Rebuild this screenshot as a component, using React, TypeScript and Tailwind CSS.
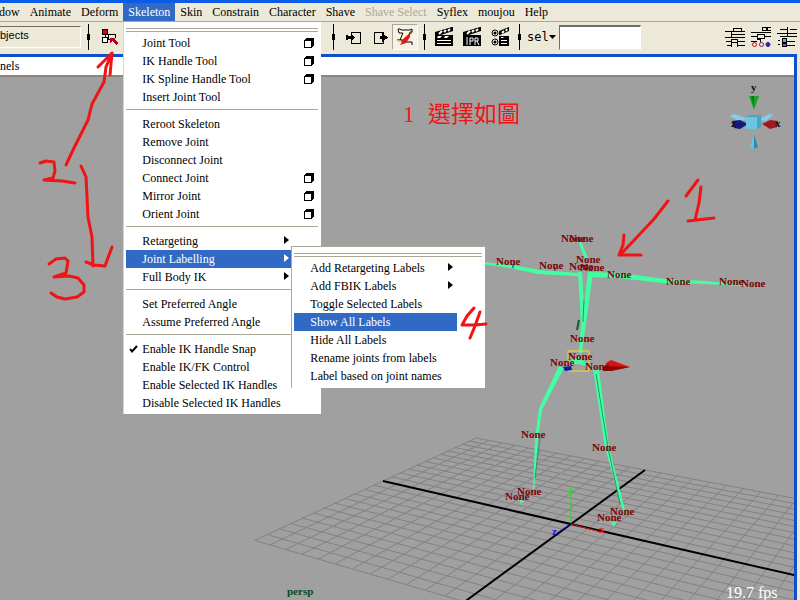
import React from 'react'

type MenuEntry = {
  name: string
  option?: boolean
  submenu?: boolean
  checked?: boolean
  active?: boolean
}

const menus = ["dow", "Animate", "Deform", "Skeleton", "Skin", "Constrain", "Character", "Shave", "Shave Select", "Syflex", "moujou", "Help"]

const skeletonGroups: MenuEntry[][] = [
  [
    { name: "Joint Tool", option: true },
    { name: "IK Handle Tool", option: true },
    { name: "IK Spline Handle Tool", option: true },
    { name: "Insert Joint Tool" },
  ],
  [
    { name: "Reroot Skeleton" },
    { name: "Remove Joint" },
    { name: "Disconnect Joint" },
    { name: "Connect Joint", option: true },
    { name: "Mirror Joint", option: true },
    { name: "Orient Joint", option: true },
  ],
  [
    { name: "Retargeting", submenu: true },
    { name: "Joint Labelling", submenu: true, active: true },
    { name: "Full Body IK", submenu: true },
  ],
  [
    { name: "Set Preferred Angle" },
    { name: "Assume Preferred Angle" },
  ],
  [
    { name: "Enable IK Handle Snap", checked: true },
    { name: "Enable IK/FK Control" },
    { name: "Enable Selected IK Handles" },
    { name: "Disable Selected IK Handles" },
  ],
]

const labelEntries: MenuEntry[] = [
  { name: "Add Retargeting Labels", submenu: true },
  { name: "Add FBIK Labels", submenu: true },
  { name: "Toggle Selected Labels" },
  { name: "Show All Labels", active: true },
  { name: "Hide All Labels" },
  { name: "Rename joints from labels" },
  { name: "Label based on joint names" },
]

// baseline positions of the joint labels in the scene
const jointLabels = [
  [561, 242], [569, 242], [496, 265], [539, 269], [576, 263], [569, 270], [580, 271], [607, 278], [666, 285],
  [719, 285], [741, 287], [570, 342], [568, 360], [550, 366], [585, 370], [521, 438], [592, 451],
  [517, 495], [505, 500], [610, 515], [597, 521],
]

function joinClassNames(...classes: string[]): string {
  return classes.join(" ")
}

function TearOff() {
  return (
    <div className="h-3 pt-[6px]">
      <div className="h-1 border-y border-[#aca899]" />
    </div>
  )
}

function OptionBox({ name }: { name: string }) {
  return (
    <button aria-label={name + " options"} className="flex w-[25px] items-center justify-end pr-1">
      <svg width="10" height="10" viewBox="0 0 10 10" shapeRendering="crispEdges">
        <path d="M2 0h8v8h-1v1h-1v1H0V2h1V1h1z" fill="#000" />
        <path d="M1 3h6v6H1z" fill="#fff" />
      </svg>
    </button>
  )
}

function MenuRow({ entry, children }: { entry: MenuEntry, children?: React.ReactNode }) {
  return (
    <li className="relative flex h-[18px]">
      <button
        className={joinClassNames(
          entry.active ? "bg-[#316ac5] text-white" : "text-black",
          "flex flex-1 items-center pr-1 text-left whitespace-nowrap"
        )}
      >
        <span className="flex w-4 shrink-0 justify-center pr-0.5">
          {entry.checked && (
            <svg width="9" height="8" viewBox="0 0 9 8">
              <path d="M1 4l2 2.500L8 1" fill="none" stroke="#000" strokeWidth="2" />
            </svg>
          )}
        </span>
        <span className="flex-1">{entry.name}</span>
        {entry.submenu && (
          <svg width="5" height="8" viewBox="0 0 5 8" className="mb-0.5">
            <path d="M0 0l5 4l-5 4z" fill="currentColor" />
          </svg>
        )}
      </button>
      {entry.option ? <OptionBox name={entry.name} /> : <span className="w-[25px]" />}
      {children}
    </li>
  )
}

function LabelMenu() {
  return (
    <ul className="absolute -top-1 left-[165px] z-20 w-[194px] border-t border-l border-[#aca899] bg-white pr-[3px] pb-[3px] pl-0.5">
      <li><TearOff /></li>
      {labelEntries.map((entry) => <MenuRow key={entry.name} entry={entry} />)}
    </ul>
  )
}

function SkeletonMenu() {
  return (
    <div className="absolute top-[19px] left-0 z-10 w-[198px] border-l border-[#d8d4c8] bg-white pr-[3px] pb-0.5 pl-0.5">
      <TearOff />
      {skeletonGroups.map((group, i) => (
        <React.Fragment key={i}>
          {i > 0 && <div className="h-[9px] pt-[3px]"><div className="h-px bg-[#aca899]" /></div>}
          <ul>
            {group.map((entry) => (
              <MenuRow key={entry.name} entry={entry}>
                {entry.name === "Joint Labelling" && <LabelMenu />}
              </MenuRow>
            ))}
          </ul>
        </React.Fragment>
      ))}
    </div>
  )
}

function MenuBar() {
  return (
    <nav className="-ml-[6px] flex h-[19px] shrink-0 border-b border-[#aca899] text-xs">
      {menus.map((name) => (
        <div key={name} className="relative flex">
          <button
            disabled={name === "Shave Select"}
            className={joinClassNames(
              name === "Skeleton" ? "bg-[#316ac5] text-white" : name === "Shave Select" ? "text-[#aca899]" : "text-black",
              "px-[5px] whitespace-nowrap"
            )}
          >
            {name}
          </button>
          {name === "Skeleton" && <SkeletonMenu />}
        </div>
      ))}
    </nav>
  )
}

function Divider() {
  return (
    <svg width="3" height="26" viewBox="0 0 3 26" shapeRendering="crispEdges" className="shrink-0">
      <path d="M1 0h1v26H1zM0 10h3v6H0z" />
    </svg>
  )
}

function Clapper({ children }: { children?: React.ReactNode }) {
  return (
    <svg width="19" height="20" viewBox="0 0 19 20">
      <path d="M0 5L17 0h1v4L3 9H0z" />
      <path d="M4 7l3-3M9 5l2-2M13 4l2-2" stroke="#fff" strokeWidth="2" />
      <path d="M0 8h18v11H0z" />
      {children}
    </svg>
  )
}

function Toolbar() {
  return (
    <div className="flex h-8 shrink-0 items-center pb-0.5">
      <input
        aria-label="Selection mask"
        defaultValue="bjects"
        className="h-[22px] w-[81px] border-t border-r border-b border-t-[#716f64] border-r-white border-b-white bg-[#ece9d8] pb-1 font-['Liberation_Sans',sans-serif] text-[11px]"
      />
      <div className="flex w-[251px] shrink-0 items-center gap-3 pl-[6px]">
        <Divider />
        <button aria-label="Select by hierarchy">
          <svg width="16" height="16" viewBox="0 0 16 16" shapeRendering="crispEdges">
            <path d="M0 0h6v6H0z" fill="#000" />
            <path d="M1 1h4v4H1z" fill="#e00000" />
            <path d="M3 6v2M6 5h7v4M6 5v5h2" stroke="#000" fill="none" />
            <path d="M0 8h6v6H0z" fill="#000" />
            <path d="M1 9h4v4H1z" fill="#fff" />
            <path d="M8 9h5l-1 1l4 4l-2 2l-4-4l-2 2z" fill="#b00018" />
          </svg>
        </button>
      </div>
      <div className="flex shrink-0 items-center">
        <Divider />
        <button aria-label="Input connections" className="ml-[11px]">
          <svg width="15" height="13" viewBox="0 0 15 13" shapeRendering="crispEdges">
            <path d="M5 3V1h9v11H5v-3" fill="none" stroke="#000" />
            <path d="M0 4h2v1h6v3H2v1H0z" />
            <path d="M5 3l4 3.500L5 10z" />
          </svg>
        </button>
        <button aria-label="Output connections" className="ml-3">
          <svg width="15" height="13" viewBox="0 0 15 13" shapeRendering="crispEdges">
            <path d="M10 3V1H1v11h9v-3" fill="none" stroke="#000" />
            <path d="M7 5h3v3H7zM9 2l6 4.500l-6 4.500z" />
          </svg>
        </button>
        <button aria-label="Construction history" className="ml-1 flex h-[26px] w-[26px] items-center justify-center border border-t-[#aca899] border-r-white border-b-white border-l-[#aca899] bg-[#f4f2e8]">
          <svg width="18" height="18" viewBox="0 0 18 18">
            <path d="M2 1h2l1 1h9l2-1v3h-2l-3 8H4l3-7H3z" fill="#fffde0" stroke="#000" />
            <path d="M1 12h4l2 2h9v3" fill="none" stroke="#000" />
            <path d="M1 12h4l1 2H3z" fill="#e8c040" />
            <path d="M14 5l-6 5l-4 7l6-2l4-6z" fill="#e01818" />
            <path d="M14 6l2-3" stroke="#805020" strokeWidth="2" />
          </svg>
        </button>
        <span className="ml-[5px] flex"><Divider /></span>
        <button aria-label="Render frame" className="ml-[9px]">
          <Clapper><path d="M3 9h4l-2 2H2zM10 9h4l-2 2H9zM2 13h14v1H2zM2 16h14v1H2z" fill="#fff" /></Clapper>
        </button>
        <button aria-label="IPR render" className="ml-[9px]">
          <Clapper>
            <path d="M4 10v8M7 18v-7h3v3H7M12 18v-7h3v3h-3M14 14l2 4" stroke="#fff" fill="none" />
          </Clapper>
        </button>
        <button aria-label="Render globals" className="ml-[9px]">
          <svg width="19" height="20" viewBox="0 0 19 20">
            <g fill="none" stroke="#000">
              <circle cx="4" cy="6" r="3" />
              <circle cx="4" cy="15" r="3" />
            </g>
            <circle cx="4" cy="6" r="1.500" />
            <circle cx="4" cy="15" r="1.500" />
            <path d="M8 4l10-4v4L9 8H8zM8 9h10v10H8z" />
            <path d="M11 6l2-2M15 4l1-2" stroke="#fff" strokeWidth="2" />
            <path d="M10 10h3l-1 1h-2zM10 13h6v1h-6zM10 16h6v1h-6z" fill="#fff" />
          </svg>
        </button>
        <span className="ml-2 flex"><Divider /></span>
        <button className="ml-[6px] flex items-center font-['DejaVu_Sans_Mono',monospace] text-xs">
          sel
          <svg width="7" height="4" viewBox="0 0 7 4"><path d="M0 0h7L3.500 4z" /></svg>
        </button>
        <input aria-label="Quick selection" className="ml-[3px] h-[25px] w-[82px] border border-t-2 border-t-[#716f64] border-r-white border-b-[#f1efe2] border-l-[#716f64] bg-white px-1 text-xs" />
      </div>
      <div className="ml-auto flex shrink-0 gap-[6px] pr-[3px]">
        <button aria-label="Show attribute editor">
          <svg width="20" height="20" viewBox="0 0 20 20" shapeRendering="crispEdges">
            <path d="M0 4h20M6 7h14M0 10h20M8 4V1h8v3M6 4v6M1 14h5M13 14h7M2 18h4M13 18h7M6 12h6v8H6zM6 15h6" fill="none" stroke="#000" />
          </svg>
        </button>
        <button aria-label="Show tool settings">
          <svg width="20" height="20" viewBox="0 0 20 20" shapeRendering="crispEdges">
            <path d="M0 5h20M11 0h4v3h-4zM16 0h4v3h-4zM0 9h6M6 7h7v4H6zM14 9h6M6 12h3v3M0 14h6" fill="none" stroke="#000" />
            <g fill="none" strokeWidth="1" shapeRendering="auto">
              <circle cx="3.500" cy="17.500" r="2" stroke="#c01010" />
              <circle cx="10.500" cy="17.500" r="2" stroke="#801060" />
              <circle cx="17" cy="17.500" r="2" stroke="#2828a0" fill="#2828a0" />
            </g>
          </svg>
        </button>
        <button aria-label="Show channel box">
          <svg width="20" height="20" viewBox="0 0 20 20" shapeRendering="crispEdges">
            <path d="M3 2h7M13 2h7M0 6h20M3 9h17M10 0v9M10 14h8M10 18h8" fill="none" stroke="#000" />
            <path d="M5 11h4v4H5z" fill="#30c8c8" stroke="#000" />
            <path d="M5 16h4v3H5z" fill="#c030c0" stroke="#000" />
            <path d="M1 13h2v1H1zM1 17h2v1H1z" />
          </svg>
        </button>
      </div>
    </div>
  )
}

// project a point of the ground plane (-1..1 on both axes) to the view
function project(x: number, z: number): string {
  const w = 1 - 0.1221 * x - 0.1796 * z
  const u = (571 + 141.2 * x - 189.8 * z) / w
  const v = (524 - 15.7 * x - 30.4 * z) / w
  return `${u.toFixed(1)} ${v.toFixed(1)}`
}

function Grid() {
  const steps = Array.from({ length: 25 }, (_, i) => (i - 12) / 12)
  const d = steps.map((s) => `M${project(-1, s)}L${project(1, s)}M${project(s, -1)}L${project(s, 1)}`).join("")
  return (
    <g fill="none">
      <path d={d} stroke="#828282" />
      <path d={`M${project(-1, 0)}L${project(1, 0)}M${project(0, -1)}L${project(0, 1)}`} stroke="#000" strokeWidth="2" />
    </g>
  )
}

function ViewCompass() {
  return (
    <g>
      <path d="M730 116l4-2l14 5l-10 2z" fill="#7fd0ea" />
      <path d="M773 115l-4-1l-11 6l8 1z" fill="#7fd0ea" />
      <path d="M732 121l8-1l8 4l-8 5l-6-1z" fill="#141a7c" />
      <path d="M778 121l-8-1l-8 4l8 5l7-2z" fill="#a01820" />
      <path d="M746 117l4-2h11v12l-4 2h-11z" fill="#4fa3bb" />
      <path d="M746 117h11v12h-11z" fill="#6cc6e0" />
      <path d="M749 96h10l-5 14z" fill="#18a828" />
      <path d="M751 96h3v12z" fill="#0c7a18" />
      <path d="M754 134l4 13l-4 2l-4-2z" fill="#66c4dc" />
      <path d="M754 134l4 13l-4 2z" fill="#2e8ba0" />
      <g className="font-bold" fontSize="11" fill="#111">
        <text x="751" y="91">y</text>
        <text x="731" y="127">z</text>
        <text x="775" y="127">x</text>
      </g>
    </g>
  )
}

function Scene() {
  return (
    <svg
      viewBox="0 77 794 523"
      preserveAspectRatio="xMaxYMax slice"
      className="block h-full w-full font-['Liberation_Serif',serif]"
    >
      <Grid />

      {/* world axes */}
      <path d="M571 523V490" stroke="#20e020" />
      <path d="M571 524l30 8" stroke="#e01010" />
      <path d="M571 524l-14 9" stroke="#1010e0" />
      <g className="font-bold" fontSize="11">
        <text x="568" y="493" fill="#20e020">y</text>
        <text x="599" y="533" fill="#f01010">x</text>
        <text x="552" y="535" fill="#1818e0">z</text>
      </g>

      {/* joints and bones */}
      <g fill="#43ffa3">
        <path d="M482 262l31 3l27 5l38 3v3l-40-2l-28-6l-28-4z" />
        <path d="M590 272l30 1l45 6l40 2l40 4v1l-40-2l-42-1l-45-5l-28-1z" />
        <path d="M578 241l3 0l7 17l-3 1z" />
        <path d="M578 272h4l2 35l4-35h5l-7 52l-4 29l-3 0l2-29z" />
        <path d="M559 366l5 2l-22 42l-4 29l-4 52h-1l2-52l4-31z" />
        <path d="M593 369l6 1l10 77l17 67l-2 0l-19-66z" />
        <path d="M519 499l5 2l-3 3zM611 521l6 2l-4 4z" />
        <path d="M578 357l-14 7l14 0l14 3z" />
      </g>
      <path d="M584 300l-1 22M596 374l12 74l12 56M540 438l-5 40" fill="none" stroke="#209c68" />
      <path d="M579 320l-2 10" stroke="#086030" strokeWidth="2" />
      <path d="M582 267l6-2l-2 6M513 264v4M555 267v4" fill="none" stroke="#101878" />
      <path d="M568 351h21v20h-21z" fill="none" stroke="#f0e020" />
      <path d="M563 367l8-1l1 4l-7 1z" fill="#0818b0" />
      <path d="M606 363l5-3l19 7l-19 4h-8z" fill="#d41414" />
      <path d="M603 366l27 1l-19 4h-8z" fill="#8c0808" />

      <g className="font-bold" fontSize="11" fill="#7a0606">
        {jointLabels.map(([x, y]) => <text key={x + "-" + y} x={x} y={y}>None</text>)}
      </g>

      <ViewCompass />

      <text x="287" y="595" fontSize="11" className="font-bold" fill="#064a20">persp</text>
      <text x="726" y="598" fontSize="16" fill="#fff">19.7 fps</text>
    </svg>
  )
}

// hand-drawn step numbers and arrows
function Annotations() {
  return (
    <svg
      viewBox="0 0 800 600"
      preserveAspectRatio="xMinYMin meet"
      className="pointer-events-none absolute inset-0 z-30 h-full w-full"
    >
      <g fill="none" stroke="#f01414" strokeWidth="3" strokeLinecap="round" strokeLinejoin="round">
        <path d="M66 165l8-17l14-28l4-16l12-22l2-15l6-14M98 67l14-14l-2 22" />
        <path d="M40 163l6-2l8 1l1 9l-2 7l-9 2l18 1l13 2" />
        <path d="M81 166l5 11l2 40l4 20l1 29M86 262l8 3l11 1l7-19" />
        <path d="M49 264l7-5l9-1l3 3l-2 12l-12 4l15-1l9 2l6 7l0 7l-7 5l-12 2l-8-2l-6-4" />
        <path d="M668 201l-14 18l-15 16l-19 20M624 235l-1 10l-4 10l22 0" />
        <path d="M686 196l12-16M701 187l-2 16l-4 17M688 221l26-3" />
        <path d="M474 308l-7 8l-5 9h13l11-1M480 312l-5 14l-5 12" />
      </g>
      <g fontSize="23" fill="#f01414" className="font-['Liberation_Serif','Noto_Sans_CJK_TC',serif]">
        <text x="403" y="122">1</text>
        <text x="428" y="122">選擇如圖</text>
      </g>
    </svg>
  )
}

function App() {
  return (
    <div className="relative flex h-screen flex-col overflow-hidden bg-[#ece9d8] font-['Liberation_Serif',serif] text-black">
      <div className="h-[3px] shrink-0 bg-[#0a5be8]" />
      <MenuBar />
      <Toolbar />
      <main className="mr-[3px] flex min-h-0 flex-1 flex-col border-t-[3px] border-r-[3px] border-[#0f4fc8]">
        <div className="flex h-5 shrink-0 items-center border-b-2 border-[#8a887c] bg-white text-xs">
          <button>nels</button>
        </div>
        <div className="min-h-0 flex-1 bg-[#a0a0a0]">
          <Scene />
        </div>
      </main>
      <Annotations />
    </div>
  )
}

export default App
